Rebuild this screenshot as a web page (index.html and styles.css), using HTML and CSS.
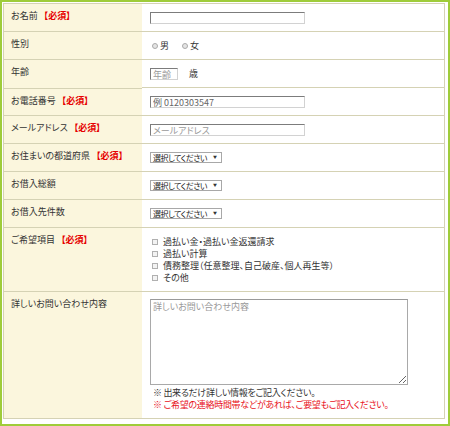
FILE: index.html
```html
<!DOCTYPE html>
<html lang="ja">
<head>
<meta charset="utf-8">
<title>お問い合わせフォーム</title>
<link rel="stylesheet" href="styles.css">
</head>
<body>
<div class="frame">
<table class="form">
  <tr>
    <th>お名前<span class="req">【必須】</span></th>
    <td><input class="txt w-long" type="text"></td>
  </tr>
  <tr>
    <th>性別</th>
    <td>
      <label class="radio"><input type="radio" name="sex">男</label>
      <label class="radio"><input type="radio" name="sex">女</label>
    </td>
  </tr>
  <tr>
    <th>年齢</th>
    <td class="age"><input class="txt w-age" type="text" placeholder="年齢"><span class="unit">歳</span></td>
  </tr>
  <tr>
    <th>お電話番号<span class="req">【必須】</span></th>
    <td><input class="txt w-long dark" type="text" placeholder="例 0120303547"></td>
  </tr>
  <tr>
    <th>メールアドレス<span class="req">【必須】</span></th>
    <td><input class="txt w-long" type="text" placeholder="メールアドレス"></td>
  </tr>
  <tr>
    <th>お住まいの都道府県<span class="req">【必須】</span></th>
    <td class="selcell"><span class="selbox" role="combobox"><span class="seltext">選択してください</span><span class="arrow">▼</span></span></td>
  </tr>
  <tr>
    <th>お借入総額</th>
    <td class="selcell"><span class="selbox" role="combobox"><span class="seltext">選択してください</span><span class="arrow">▼</span></span></td>
  </tr>
  <tr>
    <th>お借入先件数</th>
    <td class="selcell"><span class="selbox" role="combobox"><span class="seltext">選択してください</span><span class="arrow">▼</span></span></td>
  </tr>
  <tr>
    <th>ご希望項目<span class="req">【必須】</span></th>
    <td class="checks">
      <ul>
        <li><label><input type="checkbox">過払い金・過払い金返還請求</label></li>
        <li><label><input type="checkbox">過払い計算</label></li>
        <li><label><input type="checkbox">債務整理（任意整理、自己破産、個人再生等）</label></li>
        <li><label><input type="checkbox">その他</label></li>
      </ul>
    </td>
  </tr>
  <tr>
    <th>詳しいお問い合わせ内容</th>
    <td class="detail">
      <textarea placeholder="詳しいお問い合わせ内容"></textarea>
      <p class="note">※ 出来るだけ詳しい情報をご記入ください。</p>
      <p class="note red">※ ご希望の連絡時間帯などがあれば、ご要望もご記入ください。</p>
    </td>
  </tr>
</table>
</div>
</body>
</html>
```
FILE: styles.css
```css
html, body {
  margin: 0;
  padding: 0;
  background: #fff;
}

body {
  font-family: "Noto Sans CJK JP", "Noto Sans", sans-serif;
  font-size: 9px;
  color: #333;
  font-feature-settings: "palt";
}

.frame {
  width: 450px;
  height: 426px;
  box-sizing: border-box;
  border: 2px solid #9fcc3a;
  padding: 1px 3px 2px 1px;
  background: #fff;
}

.form {
  width: 100%;
  border-collapse: collapse;
  border: 1px solid #d5d2b4;
}

.form th {
  width: 124px;
  background: #fbf6dd;
  text-align: left;
  font-weight: normal;
  vertical-align: top;
  padding: 6px 7px;
  line-height: 11px;
  border-bottom: 1px solid #d5d2b4;
  white-space: nowrap;
}

.form td {
  vertical-align: top;
  padding: 8px 7px 7px 8px;
  line-height: 12px;
  border-bottom: 1px solid #d5d2b4;
}

.req {
  color: #e60000;
  font-weight: bold;
  margin-left: 6px;
}

/* text inputs */
.txt {
  display: block;
  box-sizing: border-box;
  height: 12px;
  margin: 0;
  padding: 0 2px;
  border: 1px solid;
  border-color: #7c7c7c #d2d2d2 #d2d2d2 #7c7c7c;
  background: #fff;
  font-family: inherit;
  font-size: 9px;
  line-height: 10px;
  color: #333;
  font-feature-settings: "palt";
}

.txt::placeholder {
  color: #9a9a9a;
}

.txt.dark::placeholder {
  color: #666;
}

.w-long {
  width: 155px;
}

.w-age {
  width: 28px;
  display: inline-block;
  vertical-align: top;
}

.age {
  display: flex;
  align-items: center;
}

.unit {
  margin-left: 11px;
}

/* radios */
.radio {
  display: inline-flex;
  align-items: center;
  margin-right: 9px;
}

.radio input {
  appearance: none;
  -webkit-appearance: none;
  box-sizing: border-box;
  width: 6px;
  height: 6px;
  margin: 0 2px 0 2px;
  border: 1px solid #aaa;
  border-radius: 50%;
  background: #e4e4e4;
}

/* selects */
.selcell {
  padding-top: 7px;
}

.selbox {
  display: inline-flex;
  align-items: center;
  justify-content: space-between;
  box-sizing: border-box;
  width: 72px;
  height: 11px;
  padding: 0 4px 0 2px;
  border: 1px solid #a8a8a8;
  background: #fff;
  vertical-align: top;
}

.seltext {
  font-size: 8px;
  line-height: 9px;
  letter-spacing: -0.5px;
  color: #222;
  white-space: nowrap;
}

.arrow {
  font-size: 4px;
  line-height: 9px;
  color: #333;
}

/* checkboxes */
.checks {
  padding-top: 5px;
}

.checks ul {
  list-style: none;
  margin: 0;
  padding: 0;
}

.checks li {
  line-height: 12px;
}

.checks label {
  display: inline-flex;
  align-items: center;
}

.checks input {
  appearance: none;
  -webkit-appearance: none;
  box-sizing: border-box;
  width: 6px;
  height: 6px;
  margin: 0 5px 0 2px;
  border: 1px solid #b0b0b0;
  background: #f3f3f3;
}

/* textarea */
.form td.detail {
  padding-top: 7px;
}

.detail textarea {
  display: block;
  box-sizing: border-box;
  width: 258px;
  height: 86px;
  margin: 0 0 2px;
  padding: 1px 2px;
  border: 1px solid #a9a9a9;
  border-top-color: #9a9a9a;
  font-family: inherit;
  font-size: 9px;
  line-height: 11px;
  color: #333;
  font-feature-settings: "palt";
}

.detail textarea::placeholder {
  color: #999;
}

.note {
  margin: 0 0 0 3px;
  line-height: 12px;
  letter-spacing: -0.3px;
}

.note.red {
  color: #e8101a;
}
```
